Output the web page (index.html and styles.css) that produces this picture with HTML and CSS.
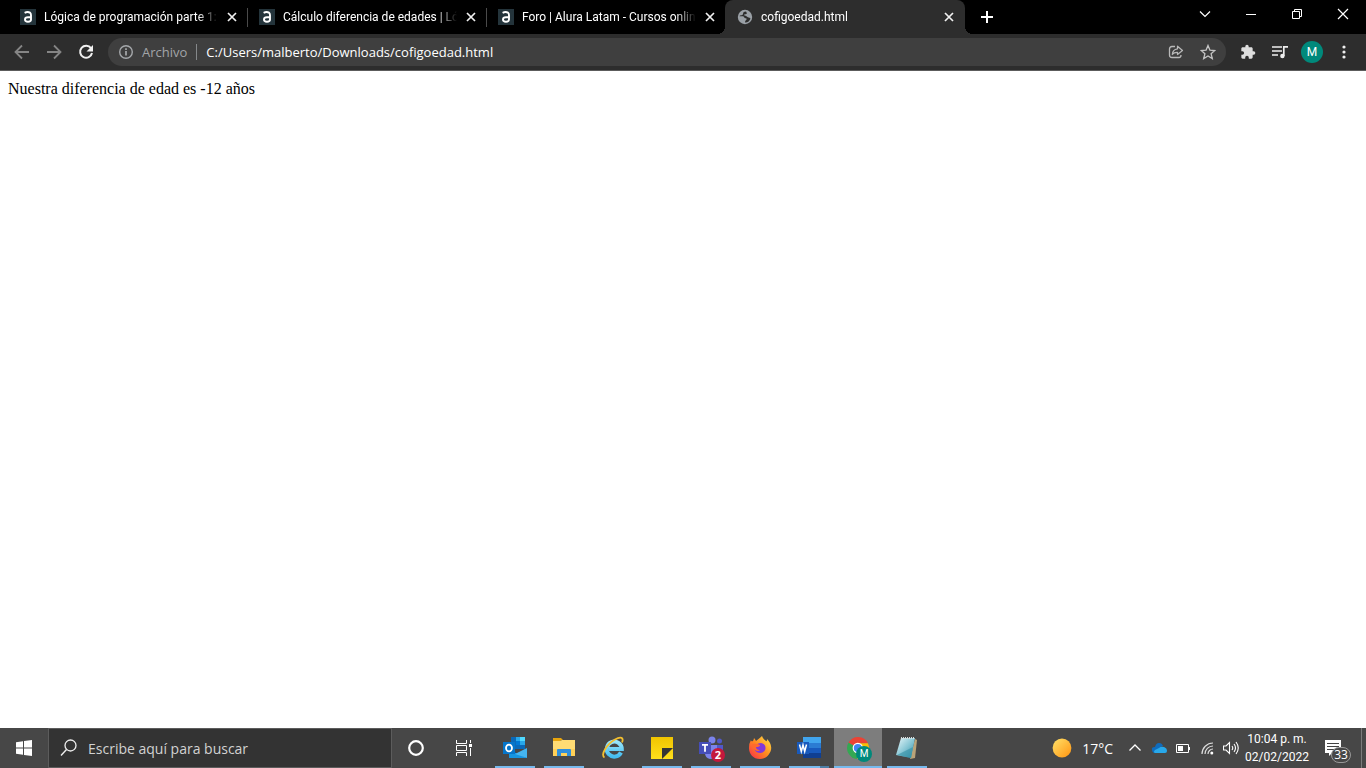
FILE: index.html
```html
<!DOCTYPE html>
<html lang="es">
<head>
<meta charset="utf-8">
<title>cofigoedad.html</title>
<link rel="stylesheet" href="styles.css">
</head>
<body>
<svg class="defs" aria-hidden="true">
  <defs>
    <symbol id="close" viewBox="0 0 16 16"><path d="M4 4l8 8M12 4l-8 8" stroke="#f1f1f1" stroke-width="1.7"/></symbol>
    <symbol id="alura" viewBox="0 0 16 16"><path fill="#24343b" d="M0 0h16v16H0z"/><path d="M4.600 3.800q3-1.500 5.300-.2 1.100.8 1.100 2.600v4.300q0 2.200-3 2.200t-3-2.200q0-2.200 3-2.200h2.500" fill="none" stroke="#fff" stroke-width="1.900"/></symbol>
    <linearGradient id="sun" x1="0" y1="0" x2="1" y2="1"><stop offset="0" stop-color="#ffe26a"/><stop offset="1" stop-color="#ff9410"/></linearGradient>
    <linearGradient id="fire" x1="1" y1="0" x2="0" y2="1"><stop offset="0" stop-color="#ffe84a"/><stop offset=".5" stop-color="#ff8a1f"/><stop offset="1" stop-color="#f8264e"/></linearGradient>
    <linearGradient id="ie" x1="0" y1="0" x2="0" y2="1"><stop offset="0" stop-color="#9ae6fb"/><stop offset="1" stop-color="#45bdf0"/></linearGradient>
    <linearGradient id="pad" x1="0" y1="0" x2="1" y2="1"><stop offset="0" stop-color="#e9f7fa"/><stop offset=".5" stop-color="#8ac8d6"/><stop offset="1" stop-color="#2c8ba3"/></linearGradient>
    <linearGradient id="note" x1="0" y1="0" x2="0" y2="1"><stop offset="0" stop-color="#f0c400"/><stop offset="1" stop-color="#ffdf1c"/></linearGradient>
  </defs>
</svg>

<header class="browser">
  <div class="tabstrip">
    <nav class="tabs">
      <div class="tab"><button class="tab-title"><svg class="favicon"><use href="#alura"/></svg><span class="tab-text">Lógica de programación parte 1:</span></button><button class="tab-close" aria-label="Cerrar"><svg class="favicon"><use href="#close"/></svg></button></div>
      <div class="tab"><button class="tab-title"><svg class="favicon"><use href="#alura"/></svg><span class="tab-text">Cálculo diferencia de edades | Ló</span></button><button class="tab-close" aria-label="Cerrar"><svg class="favicon"><use href="#close"/></svg></button></div>
      <div class="tab before-active"><button class="tab-title"><svg class="favicon"><use href="#alura"/></svg><span class="tab-text">Foro | Alura Latam - Cursos onlin</span></button><button class="tab-close" aria-label="Cerrar"><svg class="favicon"><use href="#close"/></svg></button></div>
      <div class="tab active"><button class="tab-title"><svg class="favicon" viewBox="0 0 16 16"><circle cx="8" cy="8" r="7.200" fill="#9aa0a6"/><path d="M9 2.500q-2.800 0-3 2.400c0 1.600-3 .7-3.500 2.300l3.300.1c1.700.1 1 2 2.900 2 1.500.1 1 1.500.2 1.900-.8.500-.8 1.200-.8 2.200 2.200.3 4.800-1.500 5.400-4-1-1.400-3-.7-3.800-1.900-.8-1.400-2.600-.4-2.500-1.800.1-1 2.500-.1 2.700-1.500z" fill="#2d2d2d"/></svg><span class="tab-text">cofigoedad.html</span></button><button class="tab-close" aria-label="Cerrar"><svg class="favicon"><use href="#close"/></svg></button></div>
    </nav>
    <button class="new-tab" aria-label="Nueva pestaña"><svg width="12" height="12" viewBox="0 0 12 12"><path d="M6 0v12M0 6h12" stroke="#fff" stroke-width="2"/></svg></button>
    <div class="window-controls">
      <button aria-label="Buscar pestañas"><svg width="12" height="12" viewBox="0 0 12 12"><path d="M1 3.500l5 5 5-5" fill="none" stroke="#fff" stroke-width="1.200"/></svg></button>
      <button aria-label="Minimizar"><svg width="12" height="12" viewBox="0 0 12 12"><path d="M1 6.500h10" stroke="#fff"/></svg></button>
      <button aria-label="Restaurar"><svg width="12" height="12" viewBox="0 0 12 12"><path d="M1.500 3.500h7v7h-7zM3.500 3.500v-2h7v7h-2" fill="none" stroke="#fff"/></svg></button>
      <button aria-label="Cerrar ventana"><svg width="12" height="12" viewBox="0 0 12 12"><path d="M1 1l10 10M11 1L1 11" stroke="#fff" stroke-width="1.200"/></svg></button>
    </div>
  </div>

  <div class="toolbar">
    <button class="tool" aria-label="Atrás"><svg viewBox="0 0 16 16"><path d="M15 8H2M8 1.500L1.500 8 8 14.500" fill="none" stroke="#858585" stroke-width="1.800"/></svg></button>
    <button class="tool" aria-label="Adelante"><svg viewBox="0 0 16 16"><path d="M1 8h13M8 1.500L14.500 8 8 14.500" fill="none" stroke="#858585" stroke-width="1.800"/></svg></button>
    <button class="tool" aria-label="Recargar"><svg viewBox="0 0 16 16"><path d="M13 4.200A6 6 0 1 0 14 9" fill="none" stroke="#f1f1f1" stroke-width="2"/><path d="M15 1v6.500H8.500z" fill="#f1f1f1"/></svg></button>
    <div class="omnibox">
      <svg class="info" viewBox="0 0 16 16"><circle cx="8" cy="8" r="6.300" fill="none" stroke="#a5a8ab" stroke-width="1.400"/><path d="M8 7v4.500M8 4.300v1.600" stroke="#b5b8bb" stroke-width="1.500"/></svg>
      <label class="scheme" for="url">Archivo</label>
      <input class="url" id="url" type="text" value="C:/Users/malberto/Downloads/cofigoedad.html">
      <button class="tool" aria-label="Compartir"><svg viewBox="0 0 16 16"><path d="M7 2.500H4q-2.500 0-2.500 2.500v6q0 2.500 2.500 2.500h7q2 0 2-2.500" fill="none" stroke="#b9b9b9" stroke-width="1.300"/><path d="M9.500 2.200l5 4.300-5 4V8.300q-3.500-.2-5.200 2.200.3-5 5.200-5.700z" fill="none" stroke="#b9b9b9" stroke-width="1.200" stroke-linejoin="round"/></svg></button>
      <button class="tool" aria-label="Marcador"><svg viewBox="0 0 16 16"><path d="M8 1.500l1.900 4.600 4.900.4-3.700 3.200 1.200 4.900L8 12l-4.300 2.600 1.200-4.900-3.700-3.200 4.900-.4z" fill="none" stroke="#c4c4c4" stroke-width="1.300"/></svg></button>
    </div>
    <button class="tool" aria-label="Extensiones"><svg viewBox="0 0 24 24"><path fill="#dedede" d="M20.500 11H19V7c0-1.100-.9-2-2-2h-4V3.500a2.500 2.500 0 0 0-5 0V5H4c-1.100 0-2 .9-2 2v3.800h1.500a2.700 2.700 0 0 1 0 5.400H2V20c0 1.100.9 2 2 2h3.800v-1.500a2.700 2.700 0 0 1 5.400 0V22H17c1.100 0 2-.9 2-2v-4h1.500a2.500 2.500 0 0 0 0-5z"/></svg></button>
    <button class="tool" aria-label="Control de medios"><svg viewBox="0 0 16 16"><path d="M0 3h10M0 7h10M0 11h6M11.800 12V2.800H16" fill="none" stroke="#eee" stroke-width="1.700"/><circle cx="10.400" cy="12" r="2.200" fill="#eee"/></svg></button>
    <button class="tool" aria-label="Perfil"><span class="avatar">M</span></button>
    <button class="tool" aria-label="Menú"><svg viewBox="0 0 16 16" fill="#eee"><circle cx="8" cy="3" r="1.600"/><circle cx="8" cy="8" r="1.600"/><circle cx="8" cy="13" r="1.600"/></svg></button>
  </div>
</header>

<main class="page">Nuestra diferencia de edad es -12 años</main>

<footer class="taskbar">
  <button class="cell" aria-label="Inicio"><svg width="16" height="16" viewBox="0 0 16 16"><path fill="#fff" d="M0 2.200l7-1v6.300H0zM8 1l8-1v7.500H8zM0 8.500h7v6.300l-7-1zM8 8.500h8V16l-8-1z"/></svg></button>
  <label class="search">
    <svg width="18" height="18" viewBox="0 0 18 18"><circle cx="10.500" cy="6.500" r="5.500" fill="none" stroke="#eee" stroke-width="1.300"/><path d="M6.500 10.500L1 16.500" stroke="#eee" stroke-width="1.400"/></svg>
    <input type="text" placeholder="Escribe aquí para buscar" aria-label="Escribe aquí para buscar">
  </label>
  <button class="cell" aria-label="Cortana"><svg width="18" height="18" viewBox="0 0 18 18"><circle cx="9" cy="9" r="6.800" fill="none" stroke="#fff" stroke-width="2.200"/></svg></button>
  <button class="cell" aria-label="Vista de tareas"><svg width="18" height="18" viewBox="0 0 18 18"><path d="M1.500 1v3.500h10V1M1.500 17v-3.500h10V17M1.500 6.500h10v5h-10zM15.500 1v3M15.500 9v8" fill="none" stroke="#fff"/><path fill="#fff" d="M14 5h3v3h-3z"/></svg></button>

  <div class="apps">
    <button class="cell app" aria-label="Outlook"><svg viewBox="0 0 24 24"><path fill="#0a69b8" d="M8 1h14v12H8z"/><path fill="#28a8ea" d="M13 1h4v4h-4zM17 5h5v4h-5z"/><path fill="#4fd9ff" d="M17 1h5v4h-5z"/><path fill="#0078d4" d="M13 5h4v4h-4z"/><path fill="#064c91" d="M6 12l9 6 9-6v10H6z"/><path fill="#1694df" d="M6 14l18 8H6z"/><path fill="#45b5f0" d="M24 12v10L12 18z"/><path fill="#0575ca" d="M0 6h12v12H0z"/><ellipse cx="6" cy="12" rx="3" ry="3.400" fill="none" stroke="#fff" stroke-width="1.800"/></svg></button>
    <button class="cell app" aria-label="Explorador de archivos"><svg viewBox="0 0 24 24"><path fill="#e9a50d" d="M1 2h8l2 2h-2l-1 2H1z"/><path fill="#ffdc74" d="M1 5h7l2-1h13v16H1z"/><path fill="#ffd057" d="M1 13h22v7H1z"/><path fill="#2f8fdb" d="M5 14q0-1 1-1h12q1 0 1 1v6h-4v-3H9v3H5z"/></svg></button>
    <button class="cell app idle" aria-label="Internet Explorer"><svg viewBox="0 0 24 24"><path d="M20 16.500A7.500 7.500 0 1 1 20.800 13H8" fill="none" stroke="url(#ie)" stroke-width="4"/><path d="M3.500 21.500C-1 19 6 8 14 3.500c6-3.500 9-1.800 7 3" fill="none" stroke="#f3bf2f" stroke-width="1.800"/></svg></button>
    <button class="cell app" aria-label="Notas rápidas"><svg viewBox="0 0 24 24"><path fill="url(#note)" d="M1 1h22v22H1z"/><path fill="#353535" d="M12 12h11L12 23z"/></svg></button>
    <button class="cell app" aria-label="Teams"><svg viewBox="0 0 24 24"><circle cx="13" cy="4" r="3.500" fill="#7b83eb"/><circle cx="20.500" cy="5" r="2.500" fill="#5059c9"/><path fill="#5059c9" d="M16 9h8v8q-2 5-6 3z"/><path fill="#7b83eb" d="M7 9h11v9q-2 5-7 5-5-1-5-6z"/><path fill="#464eb8" d="M0 6h12v12H0z"/><path d="M3 8.800h6M6 8.800v7" stroke="#fff" stroke-width="1.800"/></svg><span class="badge">2</span></button>
    <button class="cell app" aria-label="Firefox"><svg viewBox="0 0 24 24"><path fill="url(#fire)" d="M5 5q1-2 1-3 1 1 2 3 4-3 6-5 1 3 4 5 1 1 1-2 6 6 3.500 12.500C20 21 16 23 12 23 5 23 1 18 1 12q0-5 2-8 0 2 2 1z"/><path fill="#8138d9" d="M8 9q2-2 5-2 4.500 1 4.500 5t-5 5q-5 0-6-4z"/><path fill="#ff6a2c" d="M4 8q5-1 8 1 0 2-4 2 0 3 4 3-2 2-5 0-3-2-3-6z"/></svg></button>
    <button class="cell app stacked" aria-label="Word"><svg viewBox="0 0 24 24"><path fill="#41a5ee" d="M6 1h18v6H6z"/><path fill="#2b7cd3" d="M6 7h18v5H6z"/><path fill="#185abd" d="M6 12h18v5H6z"/><path fill="#103f91" d="M6 17h18v5H6z"/><path fill="#185abd" d="M0 6h12v12H0z"/><path d="M2.500 8.500l1.800 7L6 9l1.700 6.500 1.800-7" fill="none" stroke="#fff" stroke-width="1.500"/></svg></button>
    <button class="cell app current" aria-label="Chrome"><svg viewBox="0 0 24 24"><path fill="#34a853" d="M12 12L2.500 6.500A11 11 0 0 0 11 23z"/><path fill="#fbbc04" d="M12 12h10.900A11 11 0 0 1 11 23z"/><path fill="#ea4335" d="M12 12L2.500 6.500A11 11 0 0 1 22 7.200h-8z"/><path fill="#fbbc04" d="M12 7.200h10q2 4 .5 8H12z"/><circle cx="11.800" cy="12" r="5.200" fill="#fff"/><circle cx="11.800" cy="12" r="4" fill="#4285f4"/></svg><span class="badge profile">M</span></button>
    <button class="cell app" aria-label="Bloc de notas"><svg viewBox="0 0 24 24"><path fill="#b9a379" d="M20 3l2 1-2 18-5 1z"/><path fill="url(#pad)" d="M6 2h14l-4 20-15-3z"/><path fill="#328fa5" opacity=".6" d="M18 11l-2 11-14-3z"/><path d="M6 2h14" stroke="#d9dedf" stroke-width="2" stroke-dasharray="1 1"/></svg></button>
  </div>

  <div class="tray">
    <button class="weather"><svg width="20" height="20" viewBox="0 0 20 20"><circle cx="10" cy="10" r="9.400" fill="url(#sun)"/></svg><span>17°C</span></button>
    <div class="status">
      <svg viewBox="0 0 16 16"><path d="M2.500 10.500L8 5l5.500 5.500" fill="none" stroke="#fff" stroke-width="1.300"/></svg>
      <svg viewBox="0 0 16 16"><path fill="#0f6cbd" d="M1 10q-1-3 3-3 1-4 4-4 3 0 4 3-4 1-6 7H3q-2-1-2-3z"/><path fill="#28a8ea" d="M4 13q-2-1 0-3l4-2q2-2 5-1 3 1 3 4 0 2-2 2z"/></svg>
      <svg viewBox="0 0 16 16"><path d="M1.500 4.500h12v8h-12zM14.500 7v3" fill="none" stroke="#fff"/><path fill="#fff" d="M3 6h5v5H3z"/></svg>
      <svg viewBox="0 0 16 16"><path d="M3 14A11 11 0 0 1 14 3M6 14a8 8 0 0 1 8-8M9 14a5 5 0 0 1 5-5" fill="none" stroke="#ddd" stroke-width="1.200"/><circle cx="12.800" cy="13" r="1.500" fill="#fff"/></svg>
      <svg viewBox="0 0 16 16"><path d="M.5 6h2.500l3.500-3.500v11L3 10H.5zM9 6q1.500 2 0 4M11 4q3 4 0 8M13 2q4.500 6 0 12" fill="none" stroke="#fff" stroke-width="1.100"/></svg>
    </div>
    <div class="clock"><time>10:04 p. m.</time><time>02/02/2022</time></div>
    <button class="notices" aria-label="Notificaciones"><svg width="16" height="16" viewBox="0 0 16 16"><path fill="#fff" d="M0 0h16v13H7l-3 3v-3H0z"/><path d="M2 3.500h12M2 6.500h12M2 9.500h7" stroke="#444"/></svg><span class="count">33</span></button>
  </div>
</footer>
</body>
</html>
```
FILE: styles.css
```css
* { box-sizing: border-box; }

body {
  display: flex;
  flex-direction: column;
  min-height: 100vh;
  margin: 0;
  background: #fff;
  font-family: "Open Sans", "Noto Sans", sans-serif;
}

button {
  display: flex;
  align-items: center;
  justify-content: center;
  padding: 0;
  border: 0;
  background: none;
  color: inherit;
  font: inherit;
}

input {
  min-width: 0;
  padding: 0;
  border: 0;
  outline: 0;
  background: none;
  color: inherit;
  font: inherit;
}

svg { flex: none; }
.defs { position: absolute; width: 0; height: 0; }

/* Tabs */
.tabstrip {
  display: flex;
  height: 34px;
  padding-left: 8px;
  background: #000;
  color: #fff;
}
.tabs { display: flex; }
.tab {
  position: relative;
  display: flex;
  align-items: center;
  width: 239px;
  padding: 0 7px 0 12px;
  font-family: Roboto, sans-serif;
  font-size: 12px;
}
.tab:not(.active):not(.before-active)::after {
  content: "";
  position: absolute;
  top: 8px;
  right: -1px;
  width: 1px;
  height: 19px;
  background: #4a4a4a;
}
.tab-title { flex: 1; gap: 8px; min-width: 0; height: 100%; }
.tab-text {
  flex: 1;
  overflow: hidden;
  text-align: left;
  white-space: nowrap;
  mask-image: linear-gradient(to right, #000 calc(100% - 20px), transparent);
}
.tab-close { margin-left: 6px; }
.favicon { width: 16px; height: 16px; }
.active {
  width: 240px;
  padding-right: 8px;
  border-radius: 8px 8px 0 0;
  background: #2d2d2d;
}
.active::before,
.active::after {
  content: "";
  position: absolute;
  bottom: 0;
  width: 8px;
  height: 8px;
}
.active::before { left: -8px; background: radial-gradient(circle at 0 0, #000 8px, #2d2d2d 8px); }
.active::after { right: -8px; background: radial-gradient(circle at 100% 0, #000 8px, #2d2d2d 8px); }
.new-tab { width: 28px; margin-left: 8px; }
.window-controls { display: flex; height: 28px; margin-left: auto; }
.window-controls button { width: 46px; }

/* Toolbar */
.toolbar {
  display: flex;
  align-items: center;
  height: 37px;
  padding: 0 6px;
  border-bottom: 1px solid #5c5c5c;
  background: #2d2d2d;
  color: #fff;
}
.tool { width: 32px; height: 28px; }
.tool svg { width: 16px; height: 16px; }
.omnibox {
  display: flex;
  flex: 1;
  align-items: center;
  height: 28px;
  margin: 0 6px;
  padding: 0 2px 0 10px;
  border-radius: 14px;
  background: #3f3f3f;
  font-size: 13px;
}
.info { width: 16px; height: 16px; }
.scheme {
  margin-left: 8px;
  padding-right: 9px;
  border-right: 1px solid #85888a;
  color: #a2a5a8;
  line-height: 16px;
}
.url { flex: 1; margin-left: 9px; }
.avatar {
  width: 22px;
  height: 22px;
  border-radius: 50%;
  background: #00897b;
  font: 12px/22px Roboto, sans-serif;
}

/* Document */
.page {
  flex: 1;
  padding: 8px;
  color: #000;
  font: 16px/20px "Liberation Serif", serif;
}

/* Taskbar */
.taskbar {
  display: flex;
  height: 40px;
  background: #474747;
  color: #fff;
}
.cell { width: 48px; height: 40px; }
.search {
  display: flex;
  align-items: center;
  width: 344px;
  padding: 0 11px;
  gap: 10px;
  border: 1px solid #5c5c5c;
  background: #333;
  font-size: 14px;
}
.search input { flex: 1; }
.search input::placeholder { color: #d2d2d2; opacity: 1; }
.apps { display: flex; gap: 1px; margin-left: 3px; }
.app { position: relative; }
.app svg { width: 24px; height: 24px; }
.app::after {
  content: "";
  position: absolute;
  right: 4px;
  bottom: 0;
  left: 4px;
  height: 2px;
  background: #76b9ed;
}
.idle::after { display: none; }
.stacked::after { background: linear-gradient(to right, #76b9ed 31px, #4d7ea5 31px); }
.current { background: #7d7d7d; }
.current::after { right: 0; left: 0; }
.badge {
  position: absolute;
  right: 10px;
  bottom: 6px;
  width: 14px;
  height: 14px;
  border-radius: 50%;
  background: #c4183c;
  font: 700 11px/14px "Open Sans", sans-serif;
}
.profile {
  width: 16px;
  height: 16px;
  background: #00897b;
  font: 10px/16px Roboto, sans-serif;
}
.tray {
  display: flex;
  align-items: center;
  margin-left: auto;
  padding-right: 4px;
}
.weather { gap: 10px; margin-right: 14px; font-size: 14px; }
.status { display: flex; gap: 8px; }
.status svg { width: 16px; height: 16px; }
.clock {
  display: flex;
  flex-direction: column;
  width: 76px;
  font-family: Roboto, sans-serif;
  font-size: 12px;
  line-height: 18px;
  text-align: center;
}
.notices {
  position: relative;
  justify-content: flex-start;
  width: 47px;
  height: 40px;
  padding-left: 10px;
  border-right: 1px solid #7b7b7b;
}
.count {
  position: absolute;
  right: 10px;
  bottom: 5px;
  width: 20px;
  height: 16px;
  border: 1px solid #999;
  border-radius: 8px;
  background: #474747;
  font-size: 12px;
  line-height: 14px;
}
```
